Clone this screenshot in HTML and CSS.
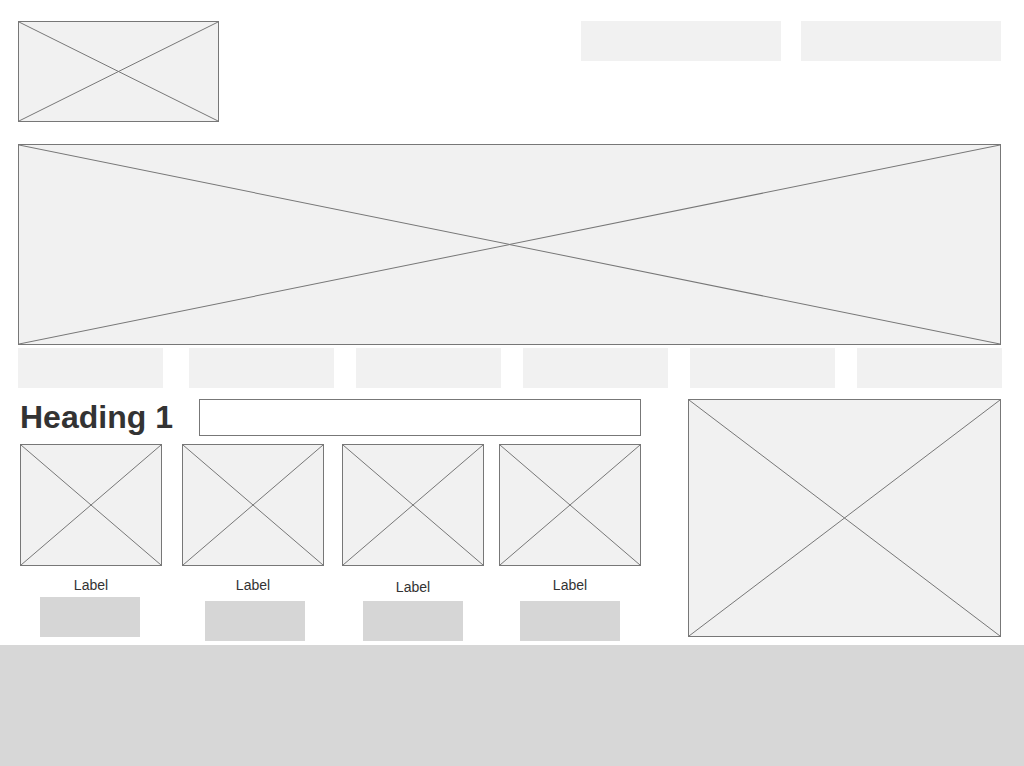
FILE: index.html
```html
<!DOCTYPE html>
<html lang="en">
<head>
    <meta charset="UTF-8">
    <meta name="viewport" content="width=device-width, initial-scale=1.0">
    <title>Wireframe</title>
    <link rel="stylesheet" href="styles.css">
</head>
<body>
    <header class="top">
        <div class="placeholder logo">
            <svg viewBox="0 0 100 100" preserveAspectRatio="none"><line x1="0" y1="0" x2="100" y2="100"/><line x1="100" y1="0" x2="0" y2="100"/></svg>
        </div>
        <div class="top-actions">
            <div class="top-btn"></div>
            <div class="top-btn"></div>
        </div>
    </header>

    <div class="placeholder hero">
        <svg viewBox="0 0 100 100" preserveAspectRatio="none"><line x1="0" y1="0" x2="100" y2="100"/><line x1="100" y1="0" x2="0" y2="100"/></svg>
    </div>

    <nav class="tabs">
        <div class="tab first"></div>
        <div class="tab"></div>
        <div class="tab"></div>
        <div class="tab"></div>
        <div class="tab"></div>
        <div class="tab"></div>
    </nav>

    <main class="main">
        <section class="left">
            <div class="title-row">
                <h1>Heading 1</h1>
                <div class="text-input"></div>
            </div>
            <div class="cards">
                <div class="card">
                    <div class="placeholder thumb">
                        <svg viewBox="0 0 100 100" preserveAspectRatio="none"><line x1="0" y1="0" x2="100" y2="100"/><line x1="100" y1="0" x2="0" y2="100"/></svg>
                    </div>
                    <p class="label">Label</p>
                    <div class="card-btn high"></div>
                </div>
                <div class="card">
                    <div class="placeholder thumb">
                        <svg viewBox="0 0 100 100" preserveAspectRatio="none"><line x1="0" y1="0" x2="100" y2="100"/><line x1="100" y1="0" x2="0" y2="100"/></svg>
                    </div>
                    <p class="label">Label</p>
                    <div class="card-btn shifted"></div>
                </div>
                <div class="card">
                    <div class="placeholder thumb">
                        <svg viewBox="0 0 100 100" preserveAspectRatio="none"><line x1="0" y1="0" x2="100" y2="100"/><line x1="100" y1="0" x2="0" y2="100"/></svg>
                    </div>
                    <p class="label low">Label</p>
                    <div class="card-btn tight"></div>
                </div>
                <div class="card">
                    <div class="placeholder thumb">
                        <svg viewBox="0 0 100 100" preserveAspectRatio="none"><line x1="0" y1="0" x2="100" y2="100"/><line x1="100" y1="0" x2="0" y2="100"/></svg>
                    </div>
                    <p class="label">Label</p>
                    <div class="card-btn"></div>
                </div>
            </div>
        </section>
        <div class="placeholder side">
            <svg viewBox="0 0 100 100" preserveAspectRatio="none"><line x1="0" y1="0" x2="100" y2="100"/><line x1="100" y1="0" x2="0" y2="100"/></svg>
        </div>
    </main>

    <footer class="footer"></footer>
</body>
</html>
```

FILE: styles.css
```css
body {
    margin: 0;
    padding: 0;
    font-family: "Liberation Sans", Arial, sans-serif;
    background-color: #fff;
    color: #333;
}

.placeholder {
    box-sizing: border-box;
    border: 1px solid #777;
    background-color: #f1f1f1;
}

.placeholder svg {
    display: block;
    width: 100%;
    height: 100%;
}

.placeholder line {
    stroke: #777;
    stroke-width: 1;
    vector-effect: non-scaling-stroke;
}

.top {
    display: flex;
    justify-content: space-between;
    align-items: flex-start;
    padding: 21px 23px 0 18px;
}

.logo {
    width: 201px;
    height: 101px;
}

.top-actions {
    display: flex;
    gap: 20px;
}

.top-btn {
    width: 200px;
    height: 40px;
    background-color: #f1f1f1;
}

.hero {
    width: 983px;
    height: 201px;
    margin: 22px 0 0 18px;
}

.tabs {
    display: flex;
    gap: 22px;
    margin: 3px 0 0 18px;
}

.tab {
    width: 145px;
    height: 40px;
    background-color: #f1f1f1;
}

.tab.first {
    margin-right: 4px;
}

.main {
    display: flex;
    align-items: flex-start;
    gap: 47px;
    margin: 11px 0 0 20px;
}

.left {
    width: 621px;
}

.title-row {
    display: flex;
    align-items: center;
    justify-content: space-between;
    height: 37px;
}

.title-row h1 {
    margin: 0;
    font-size: 32px;
    font-weight: bold;
    color: #333;
    line-height: 37px;
}

.text-input {
    box-sizing: border-box;
    width: 442px;
    height: 37px;
    border: 1px solid #777;
    background-color: #fff;
}

.cards {
    display: flex;
    margin-top: 8px;
}

.card {
    display: flex;
    flex-direction: column;
    align-items: center;
    width: 142px;
}

.card:nth-child(2) {
    margin-left: 20px;
}

.card:nth-child(3) {
    margin-left: 18px;
}

.card:nth-child(4) {
    margin-left: 15px;
}

.thumb {
    width: 142px;
    height: 122px;
}

.label {
    margin: 11px 0 0;
    font-size: 14px;
    line-height: 16px;
    color: #333;
}

.label.low {
    margin-top: 13px;
}

.card-btn {
    width: 100px;
    height: 40px;
    margin-top: 8px;
    background-color: #d6d6d6;
}

.card-btn.high {
    margin-top: 4px;
    margin-right: 2px;
}

.card-btn.shifted {
    margin-left: 4px;
}

.card-btn.tight {
    margin-top: 6px;
}

.side {
    width: 313px;
    height: 238px;
}

.footer {
    height: 121px;
    margin-top: 4px;
    background-color: #d7d7d7;
}
```
